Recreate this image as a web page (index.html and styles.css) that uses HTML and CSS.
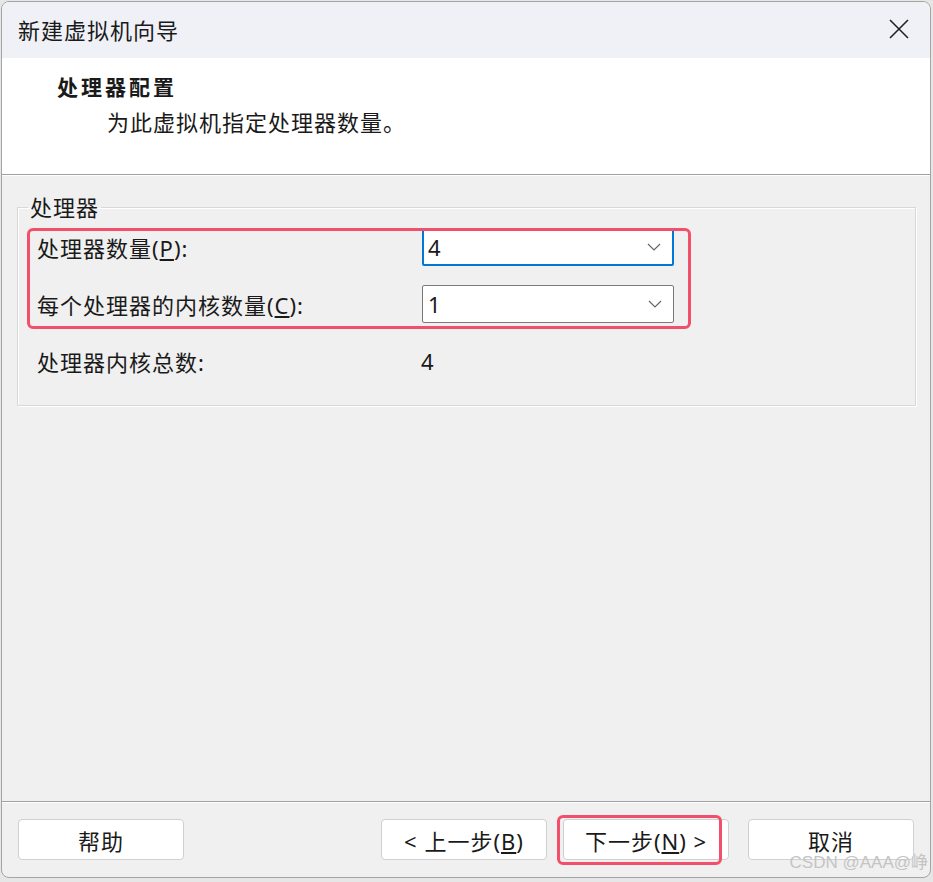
FILE: index.html
```html
<!DOCTYPE html>
<html lang="zh-CN">

<head>
	<meta charset="UTF-8">
	<title>新建虚拟机向导</title>
	<link rel="stylesheet" href="styles.css">
</head>

<body>
	<div class="window">
		<div class="titlebar">
			<span class="title">新建虚拟机向导</span>
			<svg class="close" width="22" height="22" viewBox="0 0 22 22">
				<path d="M2 2 L20 20 M20 2 L2 20" stroke="#222" stroke-width="1.6" fill="none" />
			</svg>
		</div>

		<div class="header">
			<div class="header-title">处理器配置</div>
			<div class="header-sub">为此虚拟机指定处理器数量。</div>
		</div>

		<div class="content">
			<fieldset class="group">
				<legend>处理器</legend>
				<div class="row">
					<label>处理器数量(<u>P</u>):</label>
					<div class="combo focused">
						<span>4</span>
						<svg width="14" height="8" viewBox="0 0 14 8"><path d="M1 1 L7 7 L13 1" stroke="#666" stroke-width="1.2" fill="none" /></svg>
					</div>
				</div>
				<div class="row">
					<label>每个处理器的内核数量(<u>C</u>):</label>
					<div class="combo">
						<span>1</span>
						<svg width="14" height="8" viewBox="0 0 14 8"><path d="M1 1 L7 7 L13 1" stroke="#666" stroke-width="1.2" fill="none" /></svg>
					</div>
				</div>
				<div class="row">
					<label>处理器内核总数:</label>
					<span class="total">4</span>
				</div>
				<div class="mark mark-rows"></div>
			</fieldset>
		</div>

		<div class="footer">
			<button class="btn">帮助</button>
			<div class="nav">
				<button class="btn">&lt; 上一步(<u>B</u>)</button>
				<button class="btn">下一步(<u>N</u>) &gt;</button>
				<button class="btn">取消</button>
			</div>
			<div class="mark mark-next"></div>
			<span class="watermark">CSDN @AAA@峥</span>
		</div>
	</div>
</body>

</html>
```

FILE: styles.css
```css
* {
	margin: 0;
	padding: 0;
	box-sizing: border-box;
}

body {
	font-family: 'Noto Sans', 'Noto Sans CJK SC', sans-serif;
	background: #e6e6e6;
	color: #1a1a1a;
	width: 933px;
	height: 882px;
	overflow: hidden;
}

.window {
	margin: 1px 0 0 1px;
	width: 930px;
	height: 877px;
	border: 1px solid #a4a4a4;
	border-radius: 8px;
	overflow: hidden;
	background: #f0f0f0;
	display: flex;
	flex-direction: column;
}

.titlebar {
	height: 56px;
	background: #eff1f7;
	display: flex;
	align-items: center;
	justify-content: space-between;
	padding: 0 20px 0 16px;
}

.title {
	font-size: 22px;
	letter-spacing: 1px;
	margin-top: -2px;
}

.close {
	margin-top: -2px;
}

.header {
	height: 117px;
	background: white;
	border-bottom: 1px solid #a0a0a0;
	padding: 14px 0 0 55px;
}

.header-title {
	font-size: 21px;
	font-weight: 700;
	letter-spacing: 3px;
	line-height: 30px;
}

.header-sub {
	font-size: 22px;
	letter-spacing: 1px;
	line-height: 30px;
	margin: 5px 0 0 50px;
}

.content {
	flex: 1;
	border-top: 1px solid white;
	padding: 18px 14px 0 15px;
}

.group {
	position: relative;
	border: 1px solid #d8d8d8;
	box-shadow: inset 1px 1px 0 white, 1px 1px 0 white;
	padding: 8px 19px 17px 19px;
	height: 212px;
}

.group legend {
	font-size: 22px;
	letter-spacing: 1px;
	line-height: 26px;
	padding: 0 2px;
	margin-left: -9px;
}

.row {
	display: flex;
	align-items: center;
	height: 38px;
	margin-bottom: 19px;
	font-size: 22px;
	letter-spacing: 1px;
}

.row:last-of-type {
	margin-bottom: 0;
	margin-top: 23px;
}

.row label {
	width: 385px;
}

.combo {
	width: 252px;
	height: 38px;
	background: white;
	border: 1px solid #7a7a7a;
	border-radius: 2px;
	display: flex;
	align-items: center;
	justify-content: space-between;
	padding: 0 11px 0 5px;
	letter-spacing: 0;
}

.combo.focused {
	border: 2px solid #0078d7;
	padding-left: 4px;
}

.total {
	margin-left: -1px;
}

.mark {
	position: absolute;
	border: 3px solid #f2506a;
	border-radius: 6px;
	pointer-events: none;
}

.mark-rows {
	left: 9px;
	top: 8px;
	width: 664px;
	height: 101px;
}

.footer {
	position: relative;
	height: 76px;
	border-top: 1px solid #a0a0a0;
	box-shadow: inset 0 1px 0 white;
	display: flex;
	justify-content: space-between;
	padding: 17px 16px 0 16px;
	align-items: flex-start;
}

.nav {
	display: flex;
	gap: 16px;
}

.nav .btn:last-child {
	margin-left: 3px;
}

.btn {
	width: 166px;
	height: 41px;
	background: white;
	border: 1px solid #d0d0d0;
	border-radius: 4px;
	font-family: inherit;
	font-size: 22px;
	letter-spacing: 1px;
	color: #1a1a1a;
}

.mark-next {
	left: 555px;
	top: 13px;
	width: 165px;
	height: 50px;
}

.watermark {
	position: absolute;
	right: 2px;
	bottom: 4px;
	font-size: 17px;
	color: #c4c4c4;
	font-family: 'Liberation Sans', 'Noto Sans CJK SC', sans-serif;
}
```
